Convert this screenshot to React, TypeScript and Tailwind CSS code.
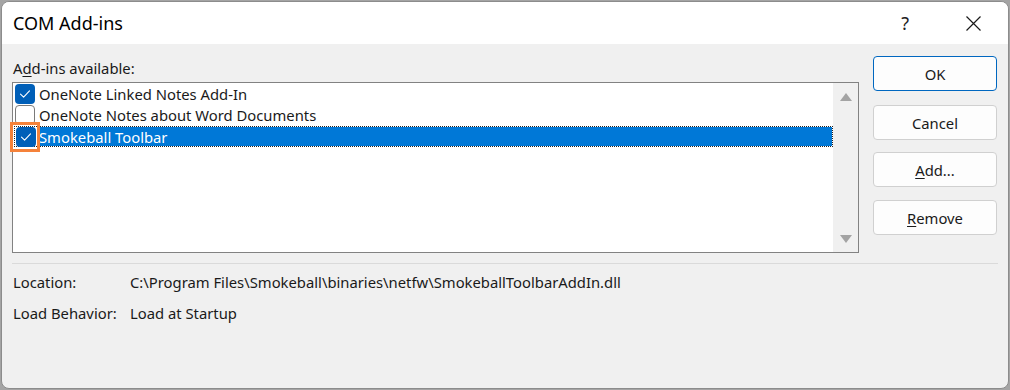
import React from "react";

function Check() {
  return (
    <svg width="12" height="10" viewBox="0 0 12 10" fill="none">
      <path d="M1.5 5.2 L4.6 8.2 L10.5 1.8" stroke="white" strokeWidth="1.1" strokeLinecap="round" strokeLinejoin="round" />
    </svg>
  );
}

function Box({ checked }: { checked: boolean }) {
  return checked ? (
    <div className="w-[20px] h-[20px] rounded-[4px] bg-[#005fb8] flex items-center justify-center shrink-0">
      <Check />
    </div>
  ) : (
    <div className="w-[20px] h-[20px] rounded-[4px] bg-white border border-[#7a7a7a] shrink-0" />
  );
}

function Btn({ children, def }: { children: React.ReactNode; def?: boolean }) {
  return (
    <div
      className={
        def
          ? "h-[35px] rounded-[4px] bg-[#fdfdfd] border border-[#0067c0] flex items-center justify-center"
          : "h-[35px] rounded-[4px] bg-[#fdfdfd] border border-[#d0d0d0] flex items-center justify-center"
      }
    >
      {children}
    </div>
  );
}

export default function App() {
  return (
    <div className="w-[1010px] h-[390px] bg-[#a4a4a4] p-px font-['Noto_Sans',sans-serif] text-[14.8px] text-[#1a1a1a] leading-[20px]">
      <div className="h-full rounded-[8px] overflow-hidden bg-[#f0f0f0] border border-[#8c8c8c] flex flex-col">
        {/* Title bar */}
        <div className="h-[42px] bg-white flex items-center pl-[11px] shrink-0">
          <span className="text-[18px] text-black">COM Add-ins</span>
          <div className="flex-1" />
          <span className="text-[18px] text-[#222] mr-[57px]">?</span>
          <svg width="15" height="15" viewBox="0 0 15 15" className="mr-[27px]">
            <path d="M0.5 0.5 L14.5 14.5 M14.5 0.5 L0.5 14.5" stroke="#1a1a1a" strokeWidth="1.2" />
          </svg>
        </div>

        {/* Main */}
        <div className="flex pl-[10px] pr-[11px] pt-[12px]">
          <div className="flex-1">
            <div className="pt-[2px] pl-[1px] h-[26px]">
              A<span className="underline underline-offset-2">d</span>d-ins available:
            </div>
            <div className="h-[171px] bg-white border border-[#828282] flex">
              <div className="flex-1 pl-[2px] pt-0">
                <div className="h-[21px] flex items-center gap-[4px]">
                  <Box checked />
                  <span>OneNote Linked Notes Add-In</span>
                </div>
                <div className="h-[21px] flex items-center gap-[4px]">
                  <Box checked={false} />
                  <span>OneNote Notes about Word Documents</span>
                </div>
                <div className="relative h-[21px] flex items-center mt-[1px] border border-dotted border-[#222] -ml-[1px]">
                  <div className="pl-[1px] pr-[2px] bg-white h-full flex items-center">
                    <Box checked />
                  </div>
                  <div className="flex-1 h-full bg-[#0078d7] text-white flex items-center pl-[1px]">
                    Smokeball Toolbar
                  </div>
                  <div className="absolute -left-[5px] -top-[5px] w-[30px] h-[30px] border-[3px] border-[#f5823a]" />
                </div>
              </div>
              <div className="w-[25px] bg-[#f0f0f0] flex flex-col items-center justify-between pt-[10px] pb-[9px]">
                <svg width="12" height="8" viewBox="0 0 12 8">
                  <path d="M6 0 L12 8 L0 8 Z" fill="#a3a3a3" />
                </svg>
                <svg width="12" height="8" viewBox="0 0 12 8">
                  <path d="M0 0 L12 0 L6 8 Z" fill="#a3a3a3" />
                </svg>
              </div>
            </div>
          </div>
          <div className="w-[124px] ml-[14px] flex flex-col">
            <Btn def>OK</Btn>
            <div className="h-[14px]" />
            <Btn>Cancel</Btn>
            <div className="h-[12px]" />
            <Btn>
              <span>
                <span className="underline underline-offset-2">A</span>dd...
              </span>
            </Btn>
            <div className="h-[13px]" />
            <Btn>
              <span>
                <span className="underline underline-offset-2">R</span>emove
              </span>
            </Btn>
          </div>
        </div>

        {/* Separator */}
        <div className="mx-[10px] mt-[10px] h-px bg-[#dadada]" />

        {/* Info */}
        <div className="pl-[11px] pt-[8px] flex flex-col gap-[11px]">
          <div className="flex">
            <span className="w-[117px]">Location:</span>
            <span>C:\Program Files\Smokeball\binaries\netfw\SmokeballToolbarAddIn.dll</span>
          </div>
          <div className="flex">
            <span className="w-[117px]">Load Behavior:</span>
            <span>Load at Startup</span>
          </div>
        </div>
      </div>
    </div>
  );
}
